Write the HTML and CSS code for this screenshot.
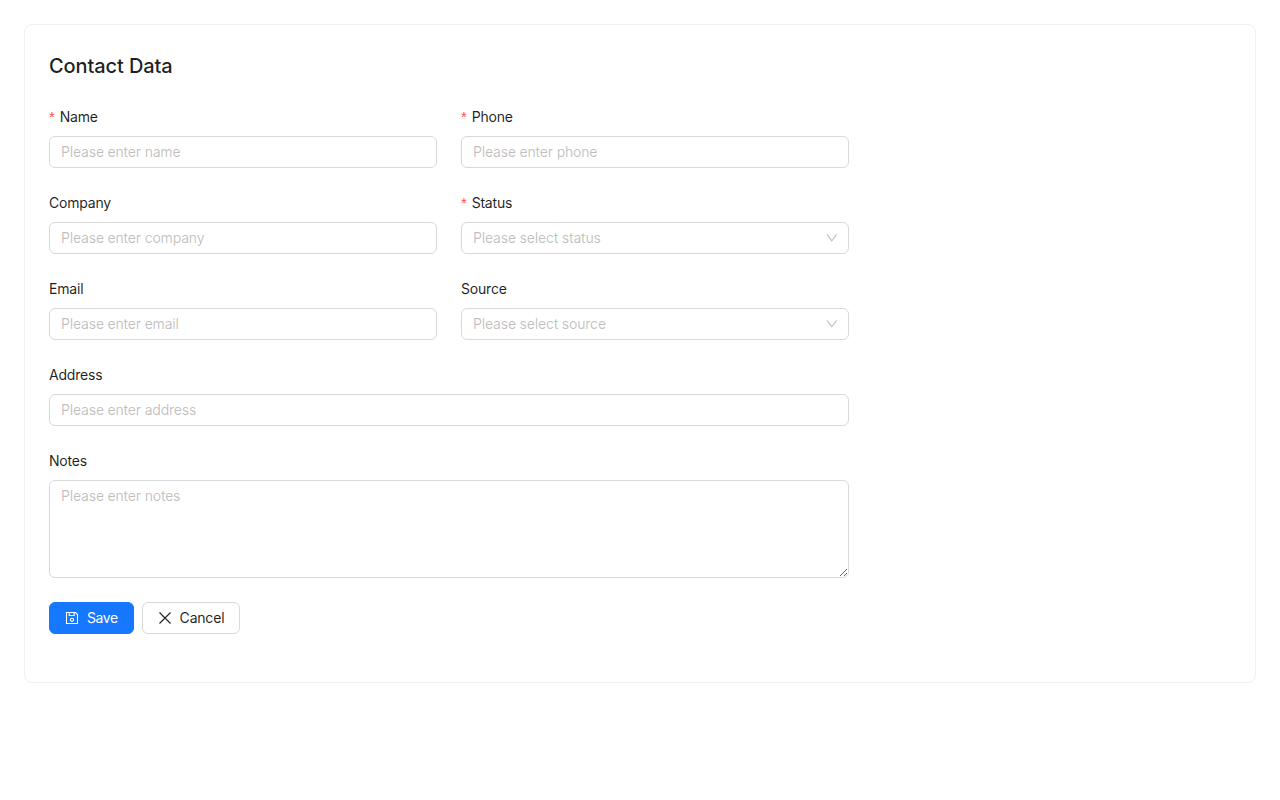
FILE: index.html
```html
<!DOCTYPE html>
<html lang="en">
<head>
    <meta charset="UTF-8">
    <title>Contact Data</title>
    <link rel="stylesheet" href="styles.css">
</head>
<body>

<div class="card">
    <h1 class="cardTitle">Contact Data</h1>

    <form class="contactForm">
        <div class="field">
            <label class="fieldLabel required" for="name">Name</label>
            <input class="textInput" id="name" type="text" placeholder="Please enter name">
        </div>
        <div class="field">
            <label class="fieldLabel required" for="phone">Phone</label>
            <input class="textInput" id="phone" type="text" placeholder="Please enter phone">
        </div>

        <div class="field">
            <label class="fieldLabel" for="company">Company</label>
            <input class="textInput" id="company" type="text" placeholder="Please enter company">
        </div>
        <div class="field">
            <span class="fieldLabel required">Status</span>
            <div class="selectBox">
                <span class="selectPlaceholder">Please select status</span>
                <svg class="selectArrow" viewBox="0 0 12 12"><path d="M2 2.4 6.8 8.8 11.6 2.4"/></svg>
            </div>
        </div>

        <div class="field">
            <label class="fieldLabel" for="email">Email</label>
            <input class="textInput" id="email" type="text" placeholder="Please enter email">
        </div>
        <div class="field">
            <span class="fieldLabel">Source</span>
            <div class="selectBox">
                <span class="selectPlaceholder">Please select source</span>
                <svg class="selectArrow" viewBox="0 0 12 12"><path d="M2 2.4 6.8 8.8 11.6 2.4"/></svg>
            </div>
        </div>

        <div class="field wide">
            <label class="fieldLabel" for="address">Address</label>
            <input class="textInput" id="address" type="text" placeholder="Please enter address">
        </div>

        <div class="field wide">
            <label class="fieldLabel" for="notes">Notes</label>
            <textarea class="textInput notesInput" id="notes" placeholder="Please enter notes"></textarea>
        </div>

        <div class="actions wide">
            <button class="btn btnPrimary" type="button">
                <svg class="btnIcon" viewBox="0 0 14 14">
                    <path d="M1.5 1.5h9l2 2v9h-11z"/>
                    <path d="M4.2 1.5v3h5v-3"/>
                    <circle cx="7" cy="8.8" r="1.6"/>
                </svg>
                Save
            </button>
            <button class="btn" type="button">
                <svg class="btnIcon" viewBox="0 0 14 14"><path d="M1.5 1.5 12.5 12.5M12.5 1.5 1.5 12.5"/></svg>
                Cancel
            </button>
        </div>
    </form>
</div>

</body>
</html>
```

FILE: styles.css
```css
html, body {
    margin: 0;
    padding: 0;
    background-color: #fff;
}

body {
    font-family: Inter, "Liberation Sans", sans-serif;
    font-size: 14px;
    line-height: 22px;
    letter-spacing: -0.2px;
    color: rgba(0, 0, 0, 0.88);
    padding: 24px;
}

.card {
    border: 1px solid #f0f0f0;
    border-radius: 8px;
    padding: 24px 24px 48px;
}

.cardTitle {
    margin: 0 0 23px;
    font-size: 20px;
    font-weight: 450;
    letter-spacing: -0.1px;
    line-height: 34px;
}

.contactForm {
    width: 800px;
    display: grid;
    grid-template-columns: 388px 388px;
    column-gap: 24px;
    row-gap: 24px;
}

.wide {
    grid-column: 1 / 3;
}

.field {
    display: flex;
    flex-direction: column;
}

.fieldLabel {
    height: 22px;
    margin-bottom: 8px;
}

.required::before {
    content: "*";
    color: #ff4d4f;
    margin-right: 5px;
    font-family: "Liberation Sans", sans-serif;
    font-size: 15px;
}

.textInput, .selectBox {
    box-sizing: border-box;
    width: 100%;
    height: 32px;
    padding: 4px 11px;
    border: 1px solid #d9d9d9;
    border-radius: 6px;
    background-color: #fff;
    font-family: inherit;
    font-size: 14px;
    line-height: 22px;
    letter-spacing: inherit;
    color: rgba(0, 0, 0, 0.88);
    outline: none;
}

input.textInput {
    padding: 3px 11px 5px;
}

.textInput::placeholder {
    color: rgba(0, 0, 0, 0.25);
    opacity: 1;
}

.notesInput {
    display: block;
    height: 98px;
    resize: vertical;
}

.selectBox {
    display: flex;
    align-items: center;
    justify-content: space-between;
}

.selectPlaceholder {
    color: rgba(0, 0, 0, 0.25);
}

.selectArrow {
    width: 12px;
    height: 12px;
    fill: none;
    stroke: rgba(0, 0, 0, 0.25);
    stroke-width: 1.1;
}

.actions {
    display: flex;
    gap: 8px;
}

.btn {
    display: flex;
    align-items: center;
    gap: 8px;
    box-sizing: border-box;
    height: 32px;
    padding: 4px 15px;
    border: 1px solid #d9d9d9;
    border-radius: 6px;
    background-color: #fff;
    font-family: inherit;
    font-size: 14px;
    line-height: 22px;
    letter-spacing: inherit;
    color: rgba(0, 0, 0, 0.88);
    cursor: pointer;
}

.btnPrimary {
    background-color: #1677ff;
    border-color: #1677ff;
    color: #fff;
    letter-spacing: -0.45px;
}

.btnIcon {
    width: 14px;
    height: 14px;
    fill: none;
    stroke: currentColor;
    stroke-width: 1.1;
}
```
